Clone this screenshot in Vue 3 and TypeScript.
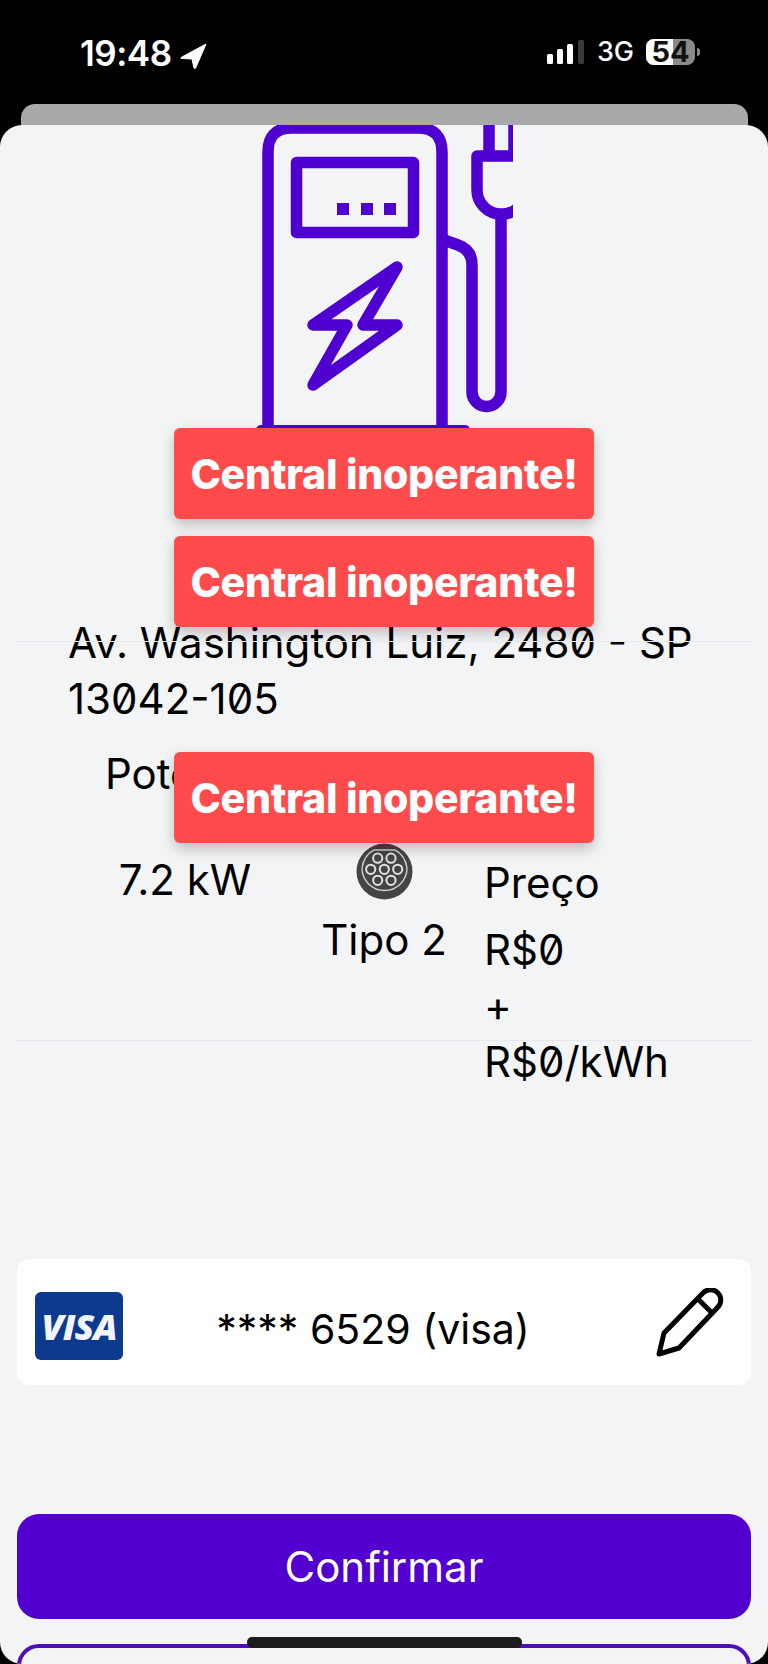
<script setup lang="ts">
const toastLabel = 'Central inoperante!'
const pins = [
  [21.7, 15.2], [35, 15.2],
  [14.7, 26.3], [28.3, 26.3], [41.7, 26.3],
  [21.7, 37.3], [35, 37.3],
]
</script>

<template>
  <div class="phone">
    <header class="status">
      <div class="status-left">
        <span class="clock">19:48</span>
        <svg class="arrow" width="27" height="26" viewBox="0 0 27 26">
          <path d="M26 1 L1 14.5 Q0.5 15.5 2 15.5 L12 16 L14 25 Q15 26 15.7 25 Z" fill="#fff" stroke="#fff" stroke-linejoin="round" />
        </svg>
      </div>
      <div class="status-right">
        <svg width="38" height="24" viewBox="0 0 38 24">
          <rect x="0" y="14" width="6" height="10" rx="1.5" fill="#fff" />
          <rect x="10" y="9" width="6" height="15" rx="1.5" fill="#fff" />
          <rect x="20" y="4" width="6" height="20" rx="1.5" fill="#fff" />
          <rect x="31" y="0" width="6" height="24" rx="1.5" fill="#3a3a3a" />
        </svg>
        <span class="network">3G</span>
        <div class="battery">
          <div class="battery-fill"></div>
          <span class="battery-num">54</span>
          <div class="battery-tip"></div>
        </div>
      </div>
    </header>

    <div class="back-sheet"></div>

    <main class="sheet">
      <svg class="pump" width="263" height="315" viewBox="250 125 263 315" fill="none" stroke="#4f00d0" stroke-width="11.5" stroke-linejoin="round">
        <path d="M268 430 V152 Q268 128 292 128 H418 Q442 128 442 152 V430" />
        <rect x="296.5" y="162.5" width="117" height="70" />
        <g fill="#4f00d0" stroke="none">
          <rect x="337" y="203" width="12" height="12" />
          <rect x="361" y="203" width="12" height="12" />
          <rect x="384" y="203" width="12" height="12" />
          <rect x="256" y="425" width="214" height="14" rx="5" />
        </g>
        <path d="M397 267 L313 325 H347 L313 385 L397 325 H363 Z" />
        <path d="M444 240 L458 245 Q472 250 472 265 V392 A14.5 14.5 0 0 0 501 392 V214" />
        <path d="M520 156 H477 V190 A24 24 0 0 0 501 214 A24 24 0 0 0 520 206" />
        <path d="M489 120 V156 M514 120 V156" />
      </svg>

      <hr class="rule rule-top" />

      <p class="address">Av. Washington Luiz, 2480 - SP 13042-105</p>

      <section class="stats">
        <div class="stat stat-power">
          <div class="power-title">Potência</div>
          <div class="power-value">7.2 kW</div>
        </div>
        <div class="stat stat-plug">
          <svg class="plug" width="57" height="57" viewBox="0 0 57 57">
            <circle cx="28.5" cy="28.5" r="28" fill="#444" />
            <path d="M18 7 H39 Q49 12 51 25 A22.5 22.5 0 1 1 6 25 Q8 12 18 7 Z" fill="none" stroke="#cfcfcf" stroke-width="1.4" />
            <circle v-for="(p, i) in pins" :key="i" :cx="p[0]" :cy="p[1]" r="4.6" fill="none" stroke="#e2e2e2" stroke-width="2" />
          </svg>
          <div class="plug-name">Tipo 2</div>
        </div>
        <div class="stat stat-price">
          <div class="price-title">Preço</div>
          <div>R$0</div>
          <div>+</div>
          <div>R$0/kWh</div>
        </div>
      </section>

      <hr class="rule rule-bottom" />

      <section class="card">
        <div class="visa"><span>VISA</span></div>
        <span class="card-number">**** 6529 (visa)</span>
        <svg class="pencil" width="68" height="70" viewBox="0 0 68 70" fill="none" stroke="#000" stroke-width="5" stroke-linejoin="round">
          <path d="M3 66 L8 45 L47 5 A10 10 0 0 1 62 19 L23 60 Z" />
          <path d="M42 11 L56 25" />
        </svg>
      </section>

      <button class="btn btn-primary">Confirmar</button>
      <div class="btn-outline"></div>
    </main>

    <div class="toast toast-1">{{ toastLabel }}</div>
    <div class="toast toast-2">{{ toastLabel }}</div>
    <div class="toast toast-3">{{ toastLabel }}</div>

    <div class="home-bar"></div>
  </div>
</template>

<style>
html, body {
  margin: 0;
  background: #000;
}
</style>

<style scoped>
.phone {
  position: relative;
  width: 768px;
  height: 1664px;
  overflow: hidden;
  background: #000;
  font-family: Inter, "Liberation Sans", sans-serif;
  font-feature-settings: "zero";
  color: #000;
}

.status {
  height: 104px;
  box-sizing: border-box;
  padding: 35px 67px 0 80px;
  display: flex;
  justify-content: space-between;
  align-items: flex-start;
  color: #fff;
}
.status-left {
  display: flex;
  align-items: center;
  gap: 8px;
}
.clock {
  font-size: 35px;
  line-height: 36px;
  font-weight: 600;
  letter-spacing: -0.5px;
  font-feature-settings: normal;
}
.arrow {
  margin-top: 5px;
}
.status-right {
  display: flex;
  align-items: center;
  gap: 12px;
  padding-top: 4px;
}
.network {
  font-size: 27px;
  line-height: 26px;
  font-weight: 500;
}
.battery {
  position: relative;
  width: 49px;
  height: 26px;
  border-radius: 8px;
  background: #8a8a8a;
  display: flex;
  align-items: center;
  justify-content: center;
  margin-right: 6px;
}
.battery-fill {
  position: absolute;
  left: 0;
  top: 0;
  bottom: 0;
  width: 27px;
  background: #fff;
  border-radius: 8px 0 0 8px;
}
.battery-num {
  position: relative;
  font-size: 29px;
  font-weight: 700;
  line-height: 26px;
  color: #111;
}
.battery-tip {
  position: absolute;
  right: -5px;
  top: 9px;
  width: 3px;
  height: 8px;
  border-radius: 0 3px 3px 0;
  background: #8a8a8a;
}

.back-sheet {
  height: 30px;
  margin: 0 20px -9px 21px;
  background: #a8a9ab;
  border-radius: 14px 14px 0 0;
}

.sheet {
  position: relative;
  height: 1539px;
  background: #f3f4f6;
  border-radius: 22px;
  overflow: hidden;
}

.pump {
  display: block;
  margin-left: 250px;
}

.rule {
  position: relative;
  z-index: 1;
  height: 1px;
  border: 0;
  margin: 0 16px;
  background: #e5e7eb;
}
.rule-top {
  margin-top: 201px;
}
.rule-bottom {
  margin-top: -50px;
}

.address {
  margin: -27px 40px 0 68px;
  font-size: 42px;
  line-height: 56px;
}

.stats {
  display: flex;
  margin: 19px 0 0 100px;
  font-size: 42px;
  line-height: 56px;
}
.stat-power {
  width: 170px;
  margin-right: 28px;
  text-align: center;
}
.power-title {
  padding-left: 5px;
  text-align: left;
  white-space: nowrap;
}
.power-value {
  margin-top: 50px;
  white-space: nowrap;
}
.stat-plug {
  width: 172px;
  margin-right: 14px;
  text-align: center;
}
.plug {
  display: block;
  margin: 97px auto 12px;
}
.stat-price {
  margin-top: 109px;
}
.price-title {
  margin-bottom: 11px;
}

.card {
  height: 126px;
  margin: 218px 17px 0;
  padding: 0 27px 0 18px;
  box-sizing: border-box;
  display: flex;
  align-items: center;
  background: #fff;
  border-radius: 12px;
}
.visa {
  width: 88px;
  height: 68px;
  margin-top: 8px;
  border-radius: 6px;
  background: #0b3a8e;
  display: flex;
  align-items: center;
  justify-content: center;
}
.visa span {
  color: #f1f5fb;
  font-family: "Open Sans", "Liberation Sans", sans-serif;
  font-size: 36px;
  font-weight: 800;
  font-style: italic;
  letter-spacing: -1px;
}
.card-number {
  flex: 1;
  padding: 14px 33px 0 0;
  text-align: center;
  font-size: 41px;
  line-height: 50px;
}
.pencil {
  display: block;
  margin-top: 2px;
}

.btn {
  display: block;
  box-sizing: border-box;
  border: 0;
  font-family: inherit;
}
.btn-primary {
  width: 734px;
  height: 105px;
  margin: 129px 17px 0;
  padding: 0;
  border-radius: 22px;
  background: #5200d0;
  color: #fff;
  font-size: 42px;
}
.btn-outline {
  height: 100px;
  margin: 25px 17px 0;
  border: 4px solid #4f0fb8;
  border-radius: 22px;
}

.toast {
  position: absolute;
  left: 174px;
  width: 420px;
  height: 91px;
  display: flex;
  align-items: center;
  justify-content: center;
  background: #ff4b4b;
  border-radius: 6px;
  box-shadow: 0 6px 14px rgba(0, 0, 0, 0.22);
  color: #fff;
  font-size: 41px;
  font-weight: 800;
  letter-spacing: -0.3px;
  white-space: nowrap;
}
.toast-1 { top: 428px; }
.toast-2 { top: 536px; }
.toast-3 { top: 752px; }

.home-bar {
  position: absolute;
  left: 247px;
  top: 1637px;
  width: 275px;
  height: 11px;
  border-radius: 5px;
  background: #1c1c1e;
}
</style>
